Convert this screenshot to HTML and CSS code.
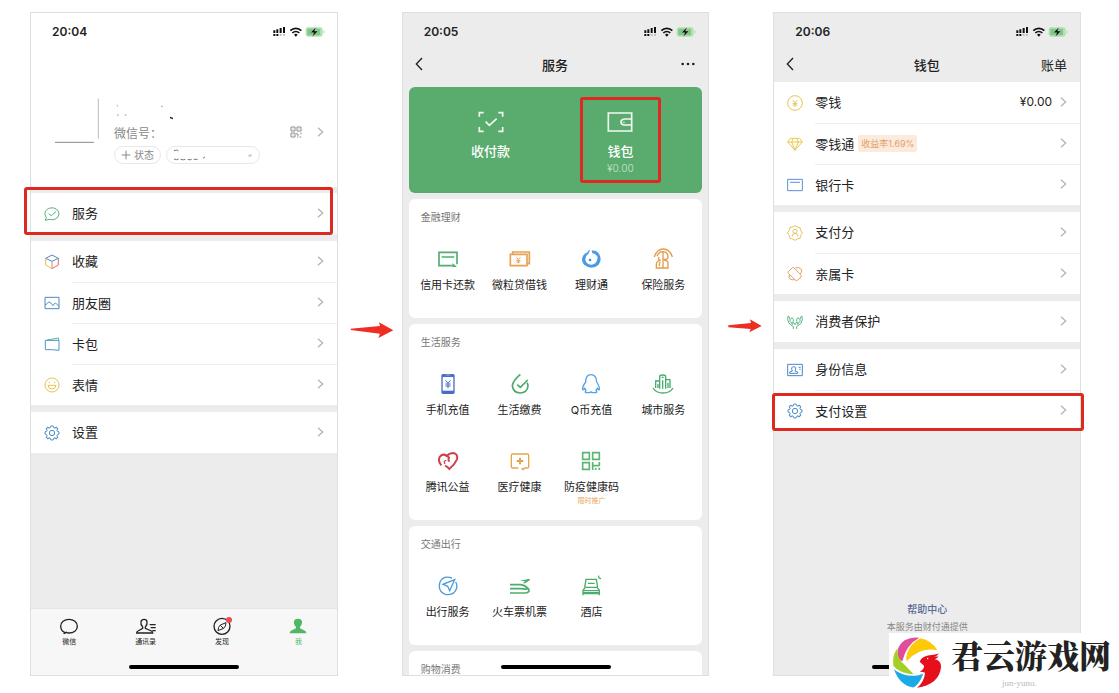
FILE: index.html
```html
<!DOCTYPE html>
<html lang="zh-CN">
    <head>
        <meta charset="utf-8">
        <title>支付设置</title>
        <link rel="stylesheet" href="styles.css">
    </head>
    <body>
        <!-- shared icons -->
        <svg class="sprite" aria-hidden="true">
            <symbol id="status" viewBox="0 0 165 42">
                <path d="M4 16h6v8H4zM13 13h6v11h-6zM23 9h6v15h-6zM33 6h6v18h-6zM4 27h6v6H4zM13 27h6v6h-6z" fill="#111"/>
                <path d="M23 27h6v5h-6zM33 27h6v5h-6z" fill="#bbb"/>
                <path d="M55 17a23 23 0 0 1 33 0M61 24a15 15 0 0 1 21 0" fill="none" stroke="#111" stroke-width="5"/>
                <path d="M66 29a8 8 0 0 1 11 0l-5.500 6z" fill="#111"/>
                <rect x="101" y="7" width="51" height="28" rx="7" fill="#b4dfb5"/>
                <rect x="106" y="11" width="38" height="20" rx="3" fill="#7cc983"/>
                <path d="M155 16q6 5 0 10z" fill="#a4d8a6"/>
                <path d="M132 6l-17 17h10l-4 13 17-18h-10z" fill="#111" stroke="#e6f4e6" stroke-width="1"/>
            </symbol>
            <symbol id="chevron" viewBox="0 0 24 30">
                <path d="M6 2l14 13L6 28" fill="none" stroke="#b5b5b5" stroke-width="4"/>
            </symbol>
            <symbol id="back" viewBox="0 0 24 42">
                <path d="M21 3L4 21l17 18" fill="none" stroke="#222" stroke-width="4"/>
            </symbol>
            <path id="tooth" d="M-6.500-15.700L-4.500-16.400L-3.500-21H3.500L4.500-16.400L6.500-15.700"/>
            <symbol id="gear" viewBox="0 0 54 54">
                <g transform="translate(27 27)" fill="none" stroke="#4f8fc9" stroke-width="3">
                    <use href="#tooth"/>
                    <use href="#tooth" transform="rotate(45)"/>
                    <use href="#tooth" transform="rotate(90)"/>
                    <use href="#tooth" transform="rotate(135)"/>
                    <use href="#tooth" transform="rotate(180)"/>
                    <use href="#tooth" transform="rotate(225)"/>
                    <use href="#tooth" transform="rotate(270)"/>
                    <use href="#tooth" transform="rotate(315)"/>
                    <circle r="8"/>
                </g>
            </symbol>
        </svg>

        <main class="steps">
            <section class="phone me">
                <header class="status">
                    <time>20:04</time>
                    <svg class="signals"><use href="#status"/></svg>
                </header>

                <div class="profile">
                    <svg class="avatar" viewBox="0 0 144 144">
                        <path d="M136 5v120" stroke="#999" stroke-width="2"/>
                        <path d="M6 136h117" stroke="#8a8a8a" stroke-width="3"/>
                        <path d="M52 76h4M40 82h3M66 82h3" stroke="#eee" stroke-width="2"/>
                    </svg>
                    <div class="info">
                        <svg class="nickname" viewBox="0 0 240 78">
                            <path d="M8 24l4 4M9 54h5M32 54h5M141 27l5 2" stroke="#999" stroke-width="3"/>
                            <path d="M168 59l9 3v5l-9-3z" fill="#222"/>
                        </svg>
                        <div class="wxid">
                            <span>微信号：</span>
                            <svg class="qr" viewBox="0 0 36 36" fill="none" stroke="#8c8c8c" stroke-width="3">
                                <path d="M3 3h12v12H3zM21 3h12v12H21zM3 21h12v12H3zM21 20v7h6M33 20v5M21 33h4M29 33h5M8 9h2M26 9h2M8 27h2"/>
                            </svg>
                            <svg class="chevron"><use href="#chevron"/></svg>
                        </div>
                        <div class="pills">
                            <button type="button" class="pill">
                                <svg class="plus" viewBox="0 0 30 30"><path d="M15 2v26M2 15h26" stroke="#888" stroke-width="3"/></svg>状态
                            </button>
                            <button type="button" class="pill friends" aria-label="朋友状态">
                                <svg viewBox="0 0 240 36" fill="none" stroke="#777" stroke-width="3">
                                    <path d="M3 5q8-4 13 0M3 30q8 4 14 0M23 31q8 3 14 0M44 31q8 3 12 0M62 31h12M90 28l6-4"/>
                                    <path d="M226 19h10l-4-4M226 19l3 4h4" stroke="#aaa" stroke-width="2"/>
                                </svg>
                            </button>
                        </div>
                    </div>
                </div>

                <div class="groups">
                    <div class="group">
                        <a href="#" class="row marked marked-service">
                            <svg class="icon" viewBox="0 0 54 54" fill="none" stroke="#52b27b" stroke-width="3">
                                <path d="M10 37a21 18 0 1 1 9 6L7 46z"/>
                                <path d="M17 26l8 6 14-12"/>
                            </svg>
                            <span class="cell">服务<svg class="chevron"><use href="#chevron"/></svg></span>
                        </a>
                    </div>
                    <div class="group">
                        <a href="#" class="row">
                            <svg class="icon" viewBox="0 0 54 54" fill="none" stroke-width="3">
                                <path d="M8 16L27 6l19 10-19 9z" stroke="#4b88c8"/>
                                <path d="M8 16v20l19 11" stroke="#e9bd55"/>
                                <path d="M46 16v20L27 47" stroke="#df6a5d"/>
                                <path d="M27 25v22" stroke="#d98a6c"/>
                            </svg>
                            <span class="cell">收藏<svg class="chevron"><use href="#chevron"/></svg></span>
                        </a>
                        <a href="#" class="row">
                            <svg class="icon" viewBox="0 0 54 54" fill="none" stroke="#4c8ac6" stroke-width="3">
                                <path d="M6 10h42v34H6zM6 34q7-5 11-10 5-1 9 7l4 4 4-6q4-3 7 1l7 7"/>
                            </svg>
                            <span class="cell">朋友圈<svg class="chevron"><use href="#chevron"/></svg></span>
                        </a>
                        <a href="#" class="row">
                            <svg class="icon" viewBox="0 0 54 54" fill="none" stroke-width="3">
                                <path d="M12 15l35-6v7" stroke="#5db896"/>
                                <path d="M7 16h41v30q-20-3-41-2z" stroke="#4a95cb"/>
                            </svg>
                            <span class="cell">卡包<svg class="chevron"><use href="#chevron"/></svg></span>
                        </a>
                        <a href="#" class="row">
                            <svg class="icon" viewBox="0 0 54 54" fill="none" stroke="#e5c452" stroke-width="3">
                                <circle cx="27" cy="27" r="21"/>
                                <path d="M15 28h24q-1 11-12 11t-12-11zM17 19h4M33 19h4"/>
                            </svg>
                            <span class="cell">表情<svg class="chevron"><use href="#chevron"/></svg></span>
                        </a>
                    </div>
                    <div class="group">
                        <a href="#" class="row">
                            <svg class="icon"><use href="#gear"/></svg>
                            <span class="cell">设置<svg class="chevron"><use href="#chevron"/></svg></span>
                        </a>
                    </div>
                </div>

                <nav class="tabs">
                    <a href="#">
                        <svg viewBox="0 0 60 54" fill="none" stroke="#222" stroke-width="4">
                            <path d="M18 47C9 43 5 36 5 28 5 16 16 7 30 7s25 9 25 21-11 20-25 20q-5 0-8-2l-8 4z"/>
                        </svg>
                        微信
                    </a>
                    <a href="#">
                        <svg viewBox="0 0 60 54" fill="none" stroke="#222" stroke-width="4">
                            <path d="M20 30c-5-5-6-11-5-16 2-9 17-9 18 0 1 6-1 12-5 16v4l18 8q4 2 4 6H2q0-4 4-6l14-8z"/>
                            <path d="M41 23h18M44 32h15M49 41h10"/>
                        </svg>
                        通讯录
                    </a>
                    <a href="#">
                        <svg viewBox="0 0 60 54" fill="none" stroke="#222" stroke-width="4">
                            <circle cx="30" cy="28" r="24"/>
                            <path d="M42 17q0 11-7 17l-17 7q0-11 7-17zM25 25l9 9" stroke-width="3"/>
                            <circle cx="51" cy="9" r="9" fill="#e84d53" stroke="none"/>
                        </svg>
                        发现
                    </a>
                    <a href="#" class="current">
                        <svg viewBox="0 0 60 54" fill="#4fb866">
                            <path d="M24 30c-6-6-7-12-6-17 2-10 22-10 24 0 1 6-1 12-6 17v4l15 7q4 2 4 8H5q0-6 4-8l15-7z"/>
                        </svg>
                        我
                    </a>
                </nav>
                <span class="home-bar"></span>
            </section>

            <svg class="arrow" viewBox="0 0 132 66" fill="#ee2e22">
                <path d="M2 29l88-8-3-11 43 24-45 23 5-13L2 33z"/>
            </svg>

            <section class="phone services">
                <header class="status">
                    <time>20:05</time>
                    <svg class="signals"><use href="#status"/></svg>
                </header>
                <div class="navbar">
                    <button type="button" aria-label="返回"><svg class="back"><use href="#back"/></svg></button>
                    <h1>服务</h1>
                    <button type="button" aria-label="更多">
                        <svg class="more" viewBox="0 0 42 12" fill="#222"><circle cx="5" cy="6" r="4"/><circle cx="21" cy="6" r="4"/><circle cx="37" cy="6" r="4"/></svg>
                    </button>
                </div>

                <div class="cards">
                    <div class="pay">
                        <a href="#">
                            <svg viewBox="0 0 78 72" fill="none" stroke="#f3faf4" stroke-width="5">
                                <path d="M4 20V8h13M61 8h13v12M74 51v13H61M17 64H4V51M23 35l11 11 22-20"/>
                            </svg>
                            收付款
                        </a>
                        <a href="#" class="marked marked-wallet">
                            <svg viewBox="0 0 78 72" fill="none" stroke="#f3faf4" stroke-width="5">
                                <path d="M4 9h70v54H4zM74 27H52q-10 1-10 9t10 9h22M51 35v3"/>
                            </svg>
                            钱包
                            <small>¥0.00</small>
                        </a>
                    </div>

                    <div class="card">
                        <h2>金融理财</h2>
                        <div class="items">
                            <a href="#">
                                <svg viewBox="0 0 66 66" fill="none" stroke="#4fae6b" stroke-width="5">
                                    <path d="M47 53H6V13h54v36M14 27h38"/><path d="M46 45l14 12H47z" fill="#4fae6b" stroke="none"/>
                                </svg>
                                信用卡还款
                            </a>
                            <a href="#">
                                <svg viewBox="0 0 66 66" fill="none" stroke="#e8a153" stroke-width="5">
                                    <path d="M11 17v-5h50v35h-6M4 19h50v34H4z"/><path d="M22 28l6 6 6-6M28 34v12M22 37h12M22 42h12" stroke-width="3"/>
                                </svg>
                                微粒贷借钱
                            </a>
                            <a href="#">
                                <svg viewBox="0 0 66 66">
                                    <path d="M24 12Q4 20 6 37q3 20 27 22 29-2 29-27Q60 14 43 7q12 10 9 27-4 17-20 16-15-2-16-16 0-12 10-17z" fill="#4b9be3"/>
                                    <path d="M29 5q1 10-9 13l6-11zM35 7l12 2q8 9 6 18-6-10-16-11z" fill="#4b9be3"/>
                                    <circle cx="30" cy="36" r="4" fill="#3c8edc"/>
                                </svg>
                                理财通
                            </a>
                            <a href="#">
                                <svg viewBox="0 0 66 66" fill="none" stroke="#e39b4d" stroke-width="4">
                                    <path d="M7 27Q15 3 34 3t27 24M15 25q6-15 18-14v49M33 11q14 0 15 16 0 7-8 7h-7M20 27q-2 9 6 10-13 2-13 12v11h35V44q-1-8-12-7M25 42q-6 9-1 12"/>
                                </svg>
                                保险服务
                            </a>
                        </div>
                    </div>

                    <div class="card">
                        <h2>生活服务</h2>
                        <div class="items">
                            <a href="#">
                                <svg viewBox="0 0 66 66">
                                    <rect x="13" y="3" width="40" height="60" rx="5" fill="#456fc5"/>
                                    <path d="M17 12h32v41H17z" fill="#fff"/>
                                    <path d="M26 6h14" stroke="#b5c9f2" stroke-width="2"/>
                                    <path d="M26 22l7 9 7-9M33 31v15M25 33h16M25 39h16" fill="none" stroke="#456fc5" stroke-width="3"/>
                                </svg>
                                手机充值
                            </a>
                            <a href="#">
                                <svg viewBox="0 0 66 66" fill="none" stroke="#4aaa69" stroke-width="5">
                                    <path d="M34 4Q11 24 10 38q2 21 23 22 22-1 24-21 0-6-3-10M25 35l9 8 22-22"/>
                                </svg>
                                生活缴费
                            </a>
                            <a href="#">
                                <svg viewBox="0 0 66 66" fill="none" stroke="#54a2e6" stroke-width="4">
                                    <path d="M17 27Q17 5 33 5t17 22q10 15 8 23-3 1-6-4l-4 7q4 3 1 6H37q-4-4-8 0H17q-3-3 1-6l-4-7q-3 5-6 4-2-8 9-23z"/>
                                </svg>
                                Q币充值
                            </a>
                            <a href="#">
                                <svg viewBox="0 0 66 66" fill="none" stroke="#4aac6b" stroke-width="4">
                                    <path d="M11 45V24h12M23 47V11q0-5 9-5t9 5v36M41 20h13v25M32 22v25M18 33v12M48 29v16M29 13h6"/>
                                    <path d="M3 45q9 15 30 15t30-15"/>
                                </svg>
                                城市服务
                            </a>
                            <a href="#">
                                <svg viewBox="0 0 66 66" fill="none" stroke="#cf4048" stroke-width="6">
                                    <path d="M13 46Q2 34 8 21q8-12 22-4l6 6q-4 9 2 11"/><path d="M28 21Q34 10 48 9q16 2 12 19-8 17-23 29-5-7-13-10"/><path d="M28 31q-10 2-4 11" stroke-width="4"/>
                                </svg>
                                腾讯公益
                            </a>
                            <a href="#">
                                <svg viewBox="0 0 66 66" fill="none" stroke="#e5a54d" stroke-width="4">
                                    <path d="M28 54H11q-4 0-4-4V16q0-4 4-4h44q4 0 4 4v34q0 4-4 4h-8l-5 5-4-5"/><path d="M33 23v20M23 33h20" stroke-width="6"/>
                                </svg>
                                医疗健康
                            </a>
                            <a href="#">
                                <svg viewBox="0 0 66 66" fill="none" stroke="#5cb575" stroke-width="5">
                                    <path d="M8 8h20v20H8zM38 8h20v20H38zM8 38h20v20H8zM38 36v24M38 47h20M58 36v12M47 54v6M58 53v7"/>
                                </svg>
                                防疫健康码
                                <small>限时推广</small>
                            </a>
                        </div>
                    </div>

                    <div class="card">
                        <h2>交通出行</h2>
                        <div class="items">
                            <a href="#">
                                <svg viewBox="0 0 66 66" fill="none" stroke="#4d9ad9" stroke-width="4">
                                    <path d="M45 9Q19 0 9 21 1 49 25 58q26 5 34-18 2-11-3-19"/><path d="M53 14L18 28l14 6 6 13z"/>
                                </svg>
                                出行服务
                            </a>
                            <a href="#">
                                <svg viewBox="0 0 66 66" fill="none" stroke="#4cac6c" stroke-width="5">
                                    <path d="M3 29h32q12 1 24 13 4 11-9 12H3M3 41h33q9 2 20 1"/>
                                    <path d="M34 17l24-5 6 1-4 4-12 8h-6l6-7H36z" fill="#4cac6c" stroke="none"/>
                                </svg>
                                火车票机票
                            </a>
                            <a href="#">
                                <svg viewBox="0 0 66 66" fill="none" stroke="#4cac6c" stroke-width="4">
                                    <path d="M14 37l4-24h31l4 24M24 25h20M9 61V46l7-9h35l7 9v15M9 47h49M9 53h49M9 56h49"/>
                                    <path d="M56 2q-1 9 7 9" stroke-width="4"/>
                                </svg>
                                酒店
                            </a>
                        </div>
                    </div>

                    <div class="card">
                        <h2>购物消费</h2>
                    </div>
                </div>
                <span class="home-bar"></span>
            </section>

            <svg class="arrow small" viewBox="0 0 102 42" fill="#ea3024">
                <path d="M1 19l68-7-3-11 35 20-37 19 4-10-67-5z"/>
            </svg>

            <section class="phone wallet">
                <header class="status">
                    <time>20:06</time>
                    <svg class="signals"><use href="#status"/></svg>
                </header>
                <div class="navbar">
                    <button type="button" aria-label="返回"><svg class="back"><use href="#back"/></svg></button>
                    <h1>钱包</h1>
                    <button type="button">账单</button>
                </div>

                <div class="groups">
                    <div class="group">
                        <a href="#" class="row">
                            <svg class="icon" viewBox="0 0 54 54" fill="none" stroke="#e6c552" stroke-width="3">
                                <circle cx="27" cy="27" r="22"/>
                                <path d="M20 18l7 8 7-8M27 26v12M20 28h14M20 33h14"/>
                            </svg>
                            <span class="cell">零钱<span class="amount">¥0.00</span><svg class="chevron"><use href="#chevron"/></svg></span>
                        </a>
                        <a href="#" class="row">
                            <svg class="icon" viewBox="0 0 54 54" fill="none" stroke="#e8c94f" stroke-width="3">
                                <path d="M13 10h28l8 11-22 25L5 21zM5 21h44M17 21l10 25 10-25M17 21l5-11M37 21l-5-11"/>
                            </svg>
                            <span class="cell">零钱通<span class="rate">收益率1.69%</span><svg class="chevron"><use href="#chevron"/></svg></span>
                        </a>
                        <a href="#" class="row">
                            <svg class="icon" viewBox="0 0 54 54" fill="none" stroke="#5c8fd6" stroke-width="3">
                                <path d="M5 10h44v34H5zM12 19h30"/>
                            </svg>
                            <span class="cell">银行卡<svg class="chevron"><use href="#chevron"/></svg></span>
                        </a>
                    </div>
                    <div class="group">
                        <a href="#" class="row">
                            <svg class="icon" viewBox="0 0 54 54" fill="none" stroke="#e7c35c" stroke-width="3">
                                <path d="M27 5l7 4 8 2 2 8 5 8-5 8-2 8-8 2-7 4-7-4-8-2-2-8-5-8 5-8 2-8 8-2z"/>
                                <circle cx="27" cy="22" r="6"/>
                                <path d="M18 38q1-10 9-10t9 10"/>
                            </svg>
                            <span class="cell">支付分<svg class="chevron"><use href="#chevron"/></svg></span>
                        </a>
                        <a href="#" class="row">
                            <svg class="icon" viewBox="0 0 54 54" fill="none" stroke="#dfa064" stroke-width="3">
                                <path d="M7 20L19 8q3-2 6 1l20 22q2 2 0 5L34 46q-3 2-5 0L7 25q-2-2 0-5zM29 8q10-3 18 6 2 7-5 13M10 30q-3 6 2 12 5 4 14 2"/>
                            </svg>
                            <span class="cell">亲属卡<svg class="chevron"><use href="#chevron"/></svg></span>
                        </a>
                    </div>
                    <div class="group">
                        <a href="#" class="row">
                            <svg class="icon" viewBox="0 0 54 54" fill="none" stroke="#59b783" stroke-width="3">
                                <path d="M22 48v-7L9 31Q3 21 6 9q6 2 6 10v6l8 9M20 34q-4-5-1-7 5 1 8 8 3-7 8-8 3 2-1 7M32 48v-7l13-10q6-10 3-22-6 2-6 10v6l-8 9M14 19l4-5 4 5v7M40 19l-4-5-4 5v7"/>
                            </svg>
                            <span class="cell">消费者保护<svg class="chevron"><use href="#chevron"/></svg></span>
                        </a>
                    </div>
                    <div class="group">
                        <a href="#" class="row">
                            <svg class="icon" viewBox="0 0 54 54" fill="none" stroke="#4d86c6" stroke-width="3">
                                <path d="M5 10h44v34H5zM11 37v-4l8-3q-6-12 4-13 10 1 4 13l8 3v4zM38 19h6M40 25h4"/>
                            </svg>
                            <span class="cell">身份信息<svg class="chevron"><use href="#chevron"/></svg></span>
                        </a>
                        <a href="#" class="row marked marked-settings">
                            <svg class="icon"><use href="#gear"/></svg>
                            <span class="cell">支付设置<svg class="chevron"><use href="#chevron"/></svg></span>
                        </a>
                    </div>
                </div>

                <footer class="help">
                    <a href="#">帮助中心</a>
                    <p>本服务由财付通提供</p>
                </footer>
                <span class="home-bar"></span>
            </section>
        </main>

        <div class="watermark">
            <svg viewBox="0 0 144 152">
                <path d="M16 62Q6 30 35 9q22-11 44-7Q40 22 28 72 20 70 16 62z" fill="#df4d9c"/>
                <path d="M42 50Q50 20 82 3q34 6 51 36-54-10-92 33-3-10 1-22z" fill="#fdca0a"/>
                <path d="M13 33Q12 66 34 82l28 29Q20 108 2 87-4 56 13 33z" fill="#a4cf25"/>
                <path d="M3 97q26 20 61 19 14 0 27-7-12 33-30 42Q21 145 3 97z" fill="#1ba9e8"/>
                <path d="M80 74q5-15 25-19 18-1 33-6-6 8-15 9h14q-6 7-12 8 20 3 19 24-5 51-72 62 22-17 24-45-8-4-16-3 14-8 13-18z" fill="#e60f1c"/>
                <circle cx="104" cy="64" r="2" fill="#fff"/>
            </svg>
            <div>
                <strong>君云游戏网</strong>
                <small>jun-yuno.</small>
            </div>
        </div>
    </body>
</html>
```
FILE: styles.css
```css
* {
    box-sizing: border-box;
}
body {
    margin: 0;
    background: #fff;
    color: #222;
    font-family: Inter, "Noto Sans CJK SC", sans-serif;
    font-size: 13px;
}
h1, h2, p {
    margin: 0;
    font-weight: 400;
}
a {
    color: inherit;
    text-decoration: none;
}
button {
    padding: 0;
    border: none;
    background: none;
    color: inherit;
    font: inherit;
    cursor: pointer;
}
svg {
    display: block;
    flex: none;
}
.sprite {
    position: absolute;
    width: 0;
    height: 0;
}

.steps {
    display: flex;
    height: 100vh;
    min-height: 660px;
    padding: 12px 38px 17px 30px;
}
.phone {
    position: relative;
    display: flex;
    flex: 1;
    flex-direction: column;
    min-width: 0;
    border: 1px solid #dfdfdf;
    background: #ececec;
}
.arrow {
    width: 44px;
    height: 22px;
    margin: 307px 8px 0 12px;
}
.arrow.small {
    width: 34px;
    height: 14px;
    margin: 307px 11px 0 19px;
}

.status {
    display: flex;
    flex: none;
    align-items: center;
    justify-content: space-between;
    height: 37px;
    padding: 0 10px 0 21px;
    font-size: 12px;
    font-weight: 600;
}
.signals {
    width: 55px;
    height: 14px;
}
.navbar {
    display: grid;
    flex: none;
    grid-template-columns: 1fr auto 1fr;
    align-items: center;
    height: 32px;
    padding: 0 13px 4px 12px;
}
.navbar h1 {
    font-size: 13px;
    font-weight: 500;
}
.navbar button {
    justify-self: start;
}
.navbar button:last-child {
    justify-self: end;
}
.back {
    width: 8px;
    height: 14px;
}
.more {
    width: 14px;
    height: 4px;
}
.home-bar {
    position: absolute;
    bottom: 6px;
    left: 50%;
    width: 110px;
    height: 4px;
    margin-left: -55px;
    border-radius: 2px;
    background: #000;
}

/* profile */
.me .status, .profile {
    background: #fff;
}
.profile {
    display: flex;
    gap: 13px;
    margin-bottom: 6px;
    padding: 47px 13px 23px 22px;
    color: #888;
}
.avatar {
    width: 48px;
    height: 48px;
}
.info {
    flex: 1;
}
.nickname {
    width: 80px;
    height: 26px;
}
.wxid {
    display: flex;
    align-items: center;
    height: 18px;
    font-size: 12px;
}
.qr {
    width: 12px;
    height: 12px;
    margin: 0 14px 0 auto;
}
.pills {
    display: flex;
    gap: 5px;
    margin-top: 5px;
}
.pill {
    display: flex;
    align-items: center;
    gap: 3px;
    height: 18px;
    padding: 0 6px;
    border: 1px solid #e8e8e8;
    border-radius: 9px;
    font-size: 10px;
    line-height: 16px;
}
.plus {
    width: 10px;
    height: 10px;
}
.friends {
    padding: 0 5px;
}
.friends svg {
    width: 82px;
    height: 12px;
}

/* list rows */
.groups {
    display: flex;
    flex-direction: column;
    gap: 7px;
}
.group {
    background: #fff;
}
.row {
    position: relative;
    display: flex;
    align-items: center;
    gap: 11px;
    height: 41px;
    padding-left: 12px;
}
.icon {
    width: 18px;
    height: 18px;
}
.cell {
    display: flex;
    flex: 1;
    align-items: center;
    height: 41px;
    padding: 0 13px 2px 0;
}
.row + .row .cell {
    border-top: 1px solid #eee;
}
.chevron {
    width: 8px;
    height: 10px;
}
.cell .chevron {
    margin-left: auto;
}
.amount {
    margin-left: auto;
    font-size: 12px;
}
.cell .amount + .chevron {
    margin-left: 7px;
}
.rate {
    margin-left: 4px;
    padding: 0 3px;
    border-radius: 2px;
    background: #fcebdc;
    color: #e0a16c;
    font-size: 9px;
    line-height: 17px;
}

/* red frames */
.marked {
    position: relative;
}
.marked::after {
    content: "";
    position: absolute;
    z-index: 1;
    border: 3px solid #dc2a20;
    border-radius: 3px;
}
.marked-service::after {
    inset: -6px 4px -1px -7px;
}
.marked-wallet::after {
    inset: 10px 24px;
}
.marked-settings::after {
    inset: 3px -4px 0 -2px;
}

.tabs {
    display: flex;
    height: 67px;
    margin-top: auto;
    padding-top: 8px;
    border-top: 1px solid #e4e4e4;
    background: #f7f7f7;
    font-size: 7px;
    line-height: 12px;
}
.tabs a {
    display: flex;
    flex: 1;
    flex-direction: column;
    align-items: center;
    gap: 1px;
}
.tabs svg {
    width: 20px;
    height: 18px;
}
.tabs .current {
    color: #4fb866;
}

/* services */
.cards {
    display: flex;
    flex: 1;
    flex-direction: column;
    gap: 6px;
    min-height: 0;
    padding: 5px 6px 0;
    overflow: hidden;
}
.pay {
    display: flex;
    flex: none;
    height: 106px;
    padding: 0 17px;
    border-radius: 6px;
    background: #59ab6e;
    color: #fff;
    font-weight: 500;
    line-height: 18px;
}
.pay a {
    display: flex;
    flex: 1;
    flex-direction: column;
    align-items: center;
    padding-top: 23px;
}
.pay svg {
    width: 26px;
    height: 24px;
    margin-bottom: 8px;
}
.pay small {
    color: #b5dcbd;
    font-size: 10px;
    font-weight: 400;
    line-height: 16px;
}
.card {
    flex: none;
    padding: 11px 3px 13px;
    border-radius: 6px;
    background: #fff;
}
.card h2 {
    padding-left: 9px;
    color: #777;
    font-size: 10px;
    line-height: 14px;
}
.items {
    display: grid;
    grid-template-columns: repeat(4, 1fr);
    row-gap: 20px;
    margin-top: 24px;
}
.items a {
    display: flex;
    flex-direction: column;
    align-items: center;
    min-height: 57px;
    font-size: 11px;
    line-height: 16px;
    white-space: nowrap;
}
.items svg {
    width: 22px;
    height: 22px;
    margin-bottom: 7px;
}
.items small {
    color: #e5a860;
    font-size: 7px;
    line-height: 12px;
}

.help {
    margin-top: auto;
    padding-bottom: 41px;
    color: #888;
    font-size: 9px;
    line-height: 14px;
    text-align: center;
}
.help a {
    display: block;
    margin-bottom: 3px;
    color: #576b95;
    font-size: 10px;
    font-weight: 500;
    line-height: 16px;
}

.watermark {
    position: absolute;
    right: 0;
    bottom: 0;
    display: flex;
    gap: 10px;
    width: 230px;
    height: 60px;
    padding: 4px 0 0 4px;
    background: #fff;
}
.watermark svg {
    width: 48px;
    height: 51px;
}
.watermark strong {
    display: block;
    font-family: "Noto Serif CJK SC", "Noto Sans CJK SC", serif;
    font-size: 32px;
    font-weight: 900;
    line-height: 34px;
}
.watermark small {
    display: block;
    margin-top: 7px;
    padding-left: 51px;
    color: #bbb;
    font-family: "Liberation Serif", serif;
    font-size: 9px;
    line-height: 10px;
}
```
